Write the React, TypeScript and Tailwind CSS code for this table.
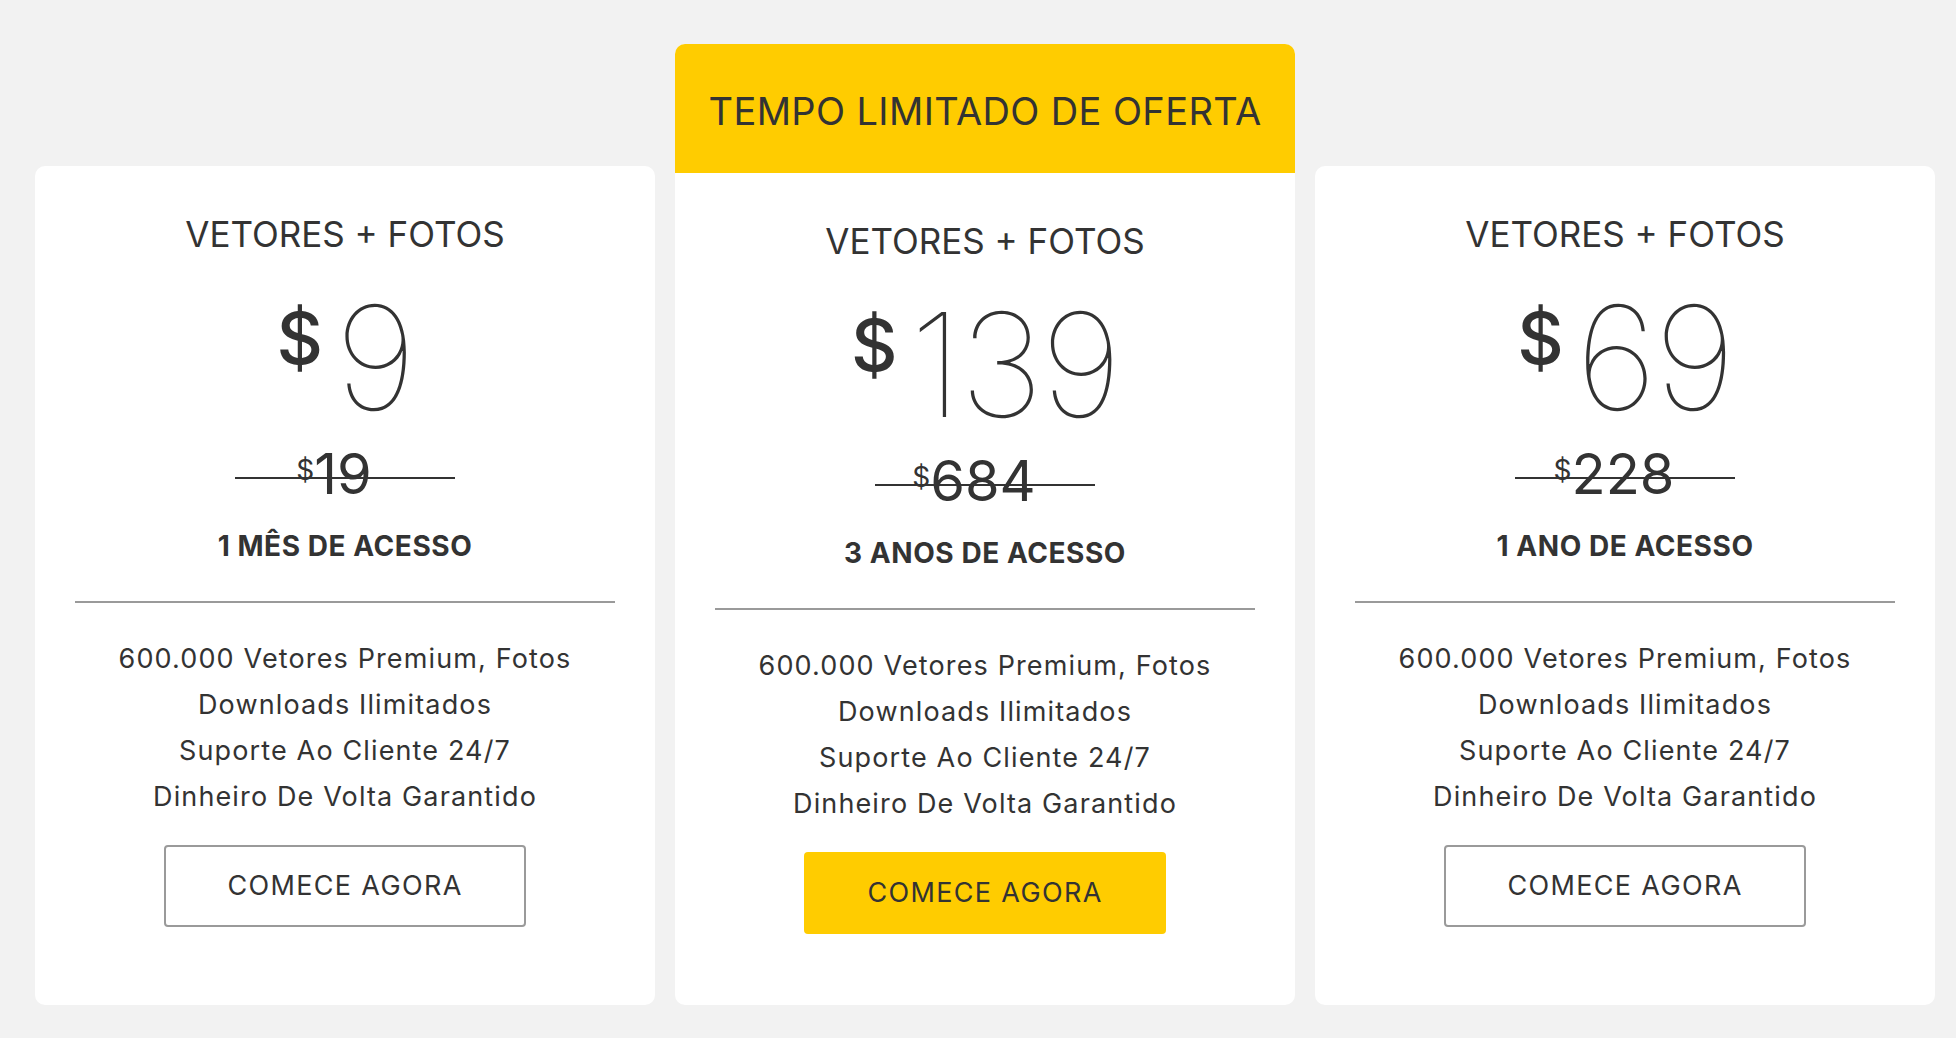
import React from 'react';

type Plan = {
  price: string;
  old: string;
  access: string;
  featured?: boolean;
};

const FEATURES = [
  '600.000 Vetores Premium, Fotos',
  'Downloads Ilimitados',
  'Suporte Ao Cliente 24/7',
  'Dinheiro De Volta Garantido',
];

const PLANS: Plan[] = [
  { price: '9', old: '19', access: '1 MÊS DE ACESSO' },
  { price: '139', old: '684', access: '3 ANOS DE ACESSO', featured: true },
  { price: '69', old: '228', access: '1 ANO DE ACESSO' },
];

function CardBody({ plan }: { plan: Plan }) {
  return (
    <div className="flex flex-col items-center pt-[51px] text-[#333]">
      <h3 className="text-[35px] leading-none font-normal">VETORES + FOTOS</h3>

      <div className="mt-[34px] flex items-start gap-[12px]">
        <span className="mt-[16px] text-[72px] leading-none font-medium">$</span>
        <span className="text-[144px] leading-none font-thin tracking-[-0.02em]">{plan.price}</span>
      </div>

      <div className="relative mt-[16px] flex w-[220px] justify-center">
        <div className="mr-[22px] flex items-start">
          <span className="mt-[10px] text-[28px] leading-none">$</span>
          <span className="text-[56px] leading-none font-normal">{plan.old}</span>
        </div>
        <span className="absolute left-0 right-0 top-[31px] h-[2px] bg-[#333]" />
      </div>

      <p className="mt-[30px] text-[28px] leading-none font-bold tracking-[0.02em]">{plan.access}</p>

      <div className="mt-[41px] h-[2px] w-[540px] bg-[#9a9a9a]" />

      <ul className="mt-[33px] text-center text-[27px] leading-[46px] tracking-[0.042em]">
        {FEATURES.map((f) => (
          <li key={f}>{f}</li>
        ))}
      </ul>

      <button
        className={
          plan.featured
            ? 'mt-[25px] flex h-[82px] w-[362px] items-center justify-center rounded-[4px] bg-[#ffcc00] text-[27px] tracking-[0.05em] text-[#333]'
            : 'mt-[25px] flex h-[82px] w-[362px] items-center justify-center rounded-[4px] border-2 border-[#9a9a9a] bg-white text-[27px] tracking-[0.05em] text-[#333]'
        }
      >
        COMECE AGORA
      </button>
    </div>
  );
}

export default function App() {
  return (
    <div
      className="flex h-[1038px] w-full items-end gap-[20px] bg-[#f2f2f2] pb-[33px] pl-[35px]"
      style={{ fontFamily: 'Inter, "Noto Sans", sans-serif' }}
    >
      {PLANS.map((plan) =>
        plan.featured ? (
          <div key={plan.price} className="flex w-[620px] flex-col overflow-hidden rounded-[10px] bg-white">
            <div className="flex h-[129px] items-center justify-center bg-[#ffcc00] pt-[4px]">
              <span className="text-[38px] leading-none tracking-[0.01em] text-[#333]">TEMPO LIMITADO DE OFERTA</span>
            </div>
            <div className="h-[832px]">
              <CardBody plan={plan} />
            </div>
          </div>
        ) : (
          <div key={plan.price} className="h-[839px] w-[620px] rounded-[10px] bg-white">
            <CardBody plan={plan} />
          </div>
        )
      )}
    </div>
  );
}
